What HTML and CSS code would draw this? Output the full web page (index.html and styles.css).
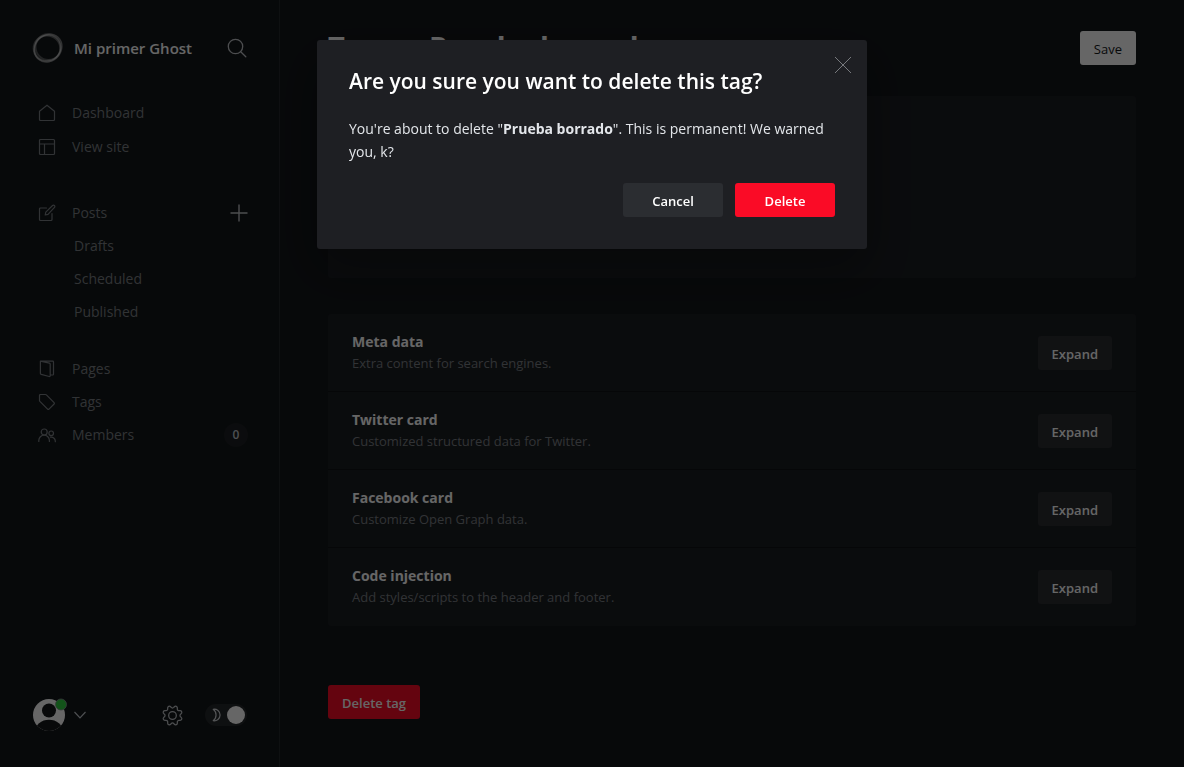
FILE: index.html
```html
<!DOCTYPE html>
<html lang="en">
<head>
<meta charset="utf-8">
<meta name="viewport" content="width=device-width, initial-scale=1">
<title>Tags - Mi primer Ghost</title>
<link rel="stylesheet" href="styles.css">
</head>
<body>
<div class="app">
  <aside class="sidebar">
    <header class="site">
      <svg class="site-logo" width="32" height="32" viewBox="0 0 32 32" fill="none" stroke="#fff" aria-hidden="true">
        <ellipse cx="15" cy="16.500" rx="13.300" ry="13" stroke-width="2" opacity=".32"/>
        <ellipse cx="16.500" cy="15" rx="13" ry="13" stroke-width="2" opacity=".28"/>
        <ellipse cx="15.500" cy="16.500" rx="12.500" ry="14" stroke-width="1.500" opacity=".3" transform="rotate(35 15.500 16.500)"/>
        <ellipse cx="16" cy="15.500" rx="14.500" ry="12.500" stroke-width="1.500" opacity=".25" transform="rotate(-35 16 15.500)"/>
      </svg>
      <span class="site-name">Mi primer Ghost</span>
      <button class="icon-button" type="button" aria-label="Search">
        <svg width="20" height="20" viewBox="0 0 20 20" fill="none" stroke="currentColor" stroke-width="1.3" stroke-linecap="round"><circle cx="8.5" cy="8.5" r="7.2"/><path d="M13.7 13.7 18.8 18.8"/></svg>
      </button>
    </header>
    <nav class="nav">
      <ul class="nav-group">
        <li><a class="nav-link" href="#"><svg class="nav-icon" viewBox="0 0 18 18"><path d="M1.5 7.2 9 1.2l7.500 6v8.300a1 1 0 0 1-1 1h-13a1 1 0 0 1-1-1z"/></svg>Dashboard</a></li>
        <li><a class="nav-link" href="#"><svg class="nav-icon" viewBox="0 0 18 18"><rect x="1.500" y="1.500" width="15" height="15" rx="1"/><path d="M1.500 6h15M6.500 6v10.500"/></svg>View site</a></li>
      </ul>
      <ul class="nav-group">
        <li class="nav-row"><a class="nav-link" href="#"><svg class="nav-icon" viewBox="0 0 18 18"><path d="M8.500 4H2.500a1 1 0 0 0-1 1v10.500a1 1 0 0 0 1 1H13a1 1 0 0 0 1-1V9.500M7.200 11l.6-2.900 6.800-6.600a1.200 1.200 0 0 1 1.700 0l.2.200a1.200 1.200 0 0 1 0 1.700L10 10.300z"/></svg>Posts</a>
          <button class="icon-button" type="button" aria-label="New post"><svg width="18" height="18" viewBox="0 0 18 18" fill="none" stroke="currentColor" stroke-width="1.400"><path d="M9 .5v17M.5 9h17"/></svg></button></li>
        <li><a class="nav-link nav-sub" href="#">Drafts</a></li>
        <li><a class="nav-link nav-sub" href="#">Scheduled</a></li>
        <li><a class="nav-link nav-sub" href="#">Published</a></li>
      </ul>
      <ul class="nav-group">
        <li><a class="nav-link" href="#"><svg class="nav-icon" viewBox="0 0 18 18"><path d="M2.500 1.200h12.200a.8.8 0 0 1 .8.800v12.200a.8.8 0 0 1-.8.800h-2.200M2.500 1.200l8.900 1.900a1 1 0 0 1 .8.900v11.700a.8.800 0 0 1-1 .8l-8-2.100a1 1 0 0 1-.8-.9V1.200z"/></svg>Pages</a></li>
        <li><a class="nav-link" href="#"><svg class="nav-icon" viewBox="0 0 18 18"><path d="M1.500 2.400a.9.900 0 0 1 .9-.9h5a1.500 1.500 0 0 1 1 .4l7.700 7.700a1 1 0 0 1 0 1.400l-5.100 5.100a1 1 0 0 1-1.400 0L1.900 8.400a1.500 1.500 0 0 1-.4-1z"/></svg>Tags</a></li>
        <li class="nav-row"><a class="nav-link" href="#"><svg class="nav-icon" viewBox="0 0 18 18"><circle cx="6.200" cy="6" r="3"/><path d="M.8 15.500v-1a5.300 5.300 0 0 1 10.600 0v1"/><circle cx="13.200" cy="7.300" r="2.300"/><path d="M12.300 11.200a4 4 0 0 1 5 3.900v.6"/></svg>Members</a><span class="count">0</span></li>
      </ul>
    </nav>
    <footer class="account">
      <button class="user" type="button" aria-label="Account menu">
        <svg width="35" height="34" viewBox="0 0 35 34" aria-hidden="true">
          <clipPath id="avatar-clip"><circle cx="17" cy="17" r="16"/></clipPath>
          <g clip-path="url(#avatar-clip)">
            <path fill="#fff" d="M0 0h35v34H0z"/>
            <circle cx="17" cy="12.500" r="7" fill="#15181b"/>
            <ellipse cx="17" cy="33.500" rx="14" ry="11.800" fill="#15181b"/>
          </g>
          <circle cx="29" cy="6.500" r="5.500" fill="#30cf43" stroke="#8d9297" stroke-width=".8"/>
        </svg>
        <svg width="12" height="8" viewBox="0 0 12 8" fill="none" stroke="currentColor" stroke-width="1.200" aria-hidden="true"><path d="M.5 1 6 6.800 11.500 1"/></svg>
      </button>
      <button class="icon-button" type="button" aria-label="Settings">
        <svg width="21" height="21" viewBox="0 0 22 22" fill="none" stroke="currentColor" stroke-width="1.300" stroke-linejoin="round"><circle cx="11" cy="11" r="4"/><path transform="rotate(22.500 11 11)" d="M9.300 1.800a1.800 1.800 0 0 1 3.400 0l.3.900a1.800 1.800 0 0 0 2.500 1l.8-.4a1.800 1.800 0 0 1 2.400 2.400l-.4.800a1.800 1.800 0 0 0 1 2.500l.9.300a1.800 1.800 0 0 1 0 3.400l-.9.300a1.800 1.800 0 0 0-1 2.500l.4.800a1.800 1.800 0 0 1-2.400 2.400l-.8-.4a1.800 1.800 0 0 0-2.500 1l-.3.900a1.800 1.800 0 0 1-3.400 0l-.3-.9a1.800 1.800 0 0 0-2.500-1l-.8.400a1.800 1.800 0 0 1-2.400-2.400l.4-.8a1.800 1.800 0 0 0-1-2.500l-.9-.3a1.800 1.800 0 0 1 0-3.400l.9-.3a1.800 1.800 0 0 0 1-2.500l-.4-.8a1.800 1.800 0 0 1 2.400-2.400l.8.400a1.800 1.800 0 0 0 2.500-1z"/></svg>
      </button>
      <label class="night">
        <input class="night-input" type="checkbox" checked aria-label="Night shift">
        <svg class="night-moon" width="10" height="14" viewBox="0 0 10 14" fill="none" stroke="currentColor" stroke-width="1.200" stroke-linejoin="round" aria-hidden="true"><path d="M1.200 1.300a5.800 5.800 0 1 1 0 11.400c3.800-2.800 3.800-8.600 0-11.400z"/></svg>
      </label>
    </footer>
  </aside>

  <main class="main">
    <header class="page-header">
      <h1 class="page-title">Tags <svg class="crumb" width="10" height="16" viewBox="0 0 10 16" fill="none" stroke="currentColor" stroke-width="2" aria-hidden="true"><path d="m2 2 6 6-6 6"/></svg> Prueba borrado</h1>
      <button class="button button-save" type="button">Save</button>
    </header>
    <section class="card settings" aria-label="Basic settings"></section>
    <section class="card sections">
      <div class="section-row"><div><h2 class="section-title">Meta data</h2><p class="section-text">Extra content for search engines.</p></div><button class="button button-gray" type="button">Expand</button></div>
      <div class="section-row"><div><h2 class="section-title">Twitter card</h2><p class="section-text">Customized structured data for Twitter.</p></div><button class="button button-gray" type="button">Expand</button></div>
      <div class="section-row"><div><h2 class="section-title">Facebook card</h2><p class="section-text">Customize Open Graph data.</p></div><button class="button button-gray" type="button">Expand</button></div>
      <div class="section-row"><div><h2 class="section-title">Code injection</h2><p class="section-text">Add styles/scripts to the header and footer.</p></div><button class="button button-gray" type="button">Expand</button></div>
    </section>
    <button class="button button-red" type="button">Delete tag</button>
  </main>
</div>

<div class="overlay">
  <div class="modal" role="dialog" aria-modal="true" aria-labelledby="modal-title">
    <button class="modal-close" type="button" aria-label="Close"><svg width="18" height="18" viewBox="0 0 18 18" fill="none" stroke="currentColor" stroke-width="1"><path d="m1 1 16 16M17 1 1 17"/></svg></button>
    <h2 class="modal-title" id="modal-title">Are you sure you want to delete this tag?</h2>
    <p class="modal-text">You're about to delete "<strong>Prueba borrado</strong>". This is permanent! We warned you, k?</p>
    <div class="modal-actions">
      <button class="button button-gray" type="button">Cancel</button>
      <button class="button button-red" type="button">Delete</button>
    </div>
  </div>
</div>
</body>
</html>
```
FILE: styles.css
```css
* { box-sizing: border-box; }

body {
  margin: 0;
  background: #13171a;
  color: #fff;
  font: 14px/20px "Open Sans", "Noto Sans", sans-serif;
}

h1, h2, p, ul { margin: 0; padding: 0; }
ul { list-style: none; }
svg { display: block; flex: none; }

button {
  border: 0;
  padding: 0;
  background: none;
  color: inherit;
  font: inherit;
  cursor: pointer;
}

.app {
  display: grid;
  grid-template-columns: 280px 1fr;
  min-height: 100vh;
}

/* Sidebar */
.sidebar {
  display: flex;
  flex-direction: column;
  border-right: 1px solid #24282c;
}

.site {
  display: flex;
  align-items: center;
  gap: 10px;
  padding: 32px 32px 0;
}

.site-name {
  flex: 1;
  font-size: 15px;
  font-weight: 600;
  white-space: nowrap;
}

.icon-button { color: #c0c4c8; }

.nav {
  flex: 1;
  display: flex;
  flex-direction: column;
  gap: 24px;
  padding: 32px 31px 0 38px;
}

.nav-group:first-child { padding-bottom: 8px; }

.nav-row {
  display: flex;
  align-items: center;
  justify-content: space-between;
}

.nav-link {
  display: flex;
  align-items: center;
  gap: 16px;
  height: 33px;
  color: #7b8085;
  text-decoration: none;
}

.nav-group:first-child .nav-link { height: 34px; }

.nav-sub { padding-left: 36px; }

.nav-icon {
  width: 18px;
  height: 18px;
  fill: none;
  stroke: currentColor;
  stroke-width: 1.2;
  stroke-linejoin: round;
  stroke-linecap: round;
}

.count {
  min-width: 24px;
  border-radius: 12px;
  background: #1d2023;
  color: #c0c6cc;
  font-size: 12px;
  font-weight: 600;
  line-height: 24px;
  text-align: center;
}

.account {
  display: flex;
  align-items: center;
  gap: 22px;
  padding: 0 32px 35px;
}

.user {
  display: flex;
  align-items: center;
  gap: 7px;
  margin-right: auto;
  color: #c0c6cc;
}

.night {
  position: relative;
  display: flex;
  cursor: pointer;
}

.night-input {
  appearance: none;
  display: flex;
  justify-content: flex-end;
  width: 42px;
  height: 22px;
  margin: 0;
  padding: 2px;
  border-radius: 11px;
  background: #25282b;
}

.night-input::before {
  content: "";
  width: 18px;
  border-radius: 50%;
  background: #fff;
}

.night-moon {
  position: absolute;
  top: 4px;
  left: 7px;
  color: #d0d4d8;
}

/* Page */
.main {
  display: flex;
  flex-direction: column;
  align-items: stretch;
  padding: 24px 48px 48px;
}

.page-header {
  display: flex;
  align-items: center;
  justify-content: space-between;
  height: 48px;
  margin-bottom: 24px;
}

.page-title {
  display: flex;
  align-items: center;
  gap: 13px;
  padding-bottom: 2px;
  font-size: 29px;
  font-weight: 700;
  line-height: 38px;
}

.crumb { color: #7b8085; }

.button {
  flex: none;
  height: 34px;
  padding: 2px 14px 0;
  border-radius: 3px;
  font-size: 13px;
  font-weight: 600;
}

.button-save {
  background: #fff;
  color: #15171a;
  font-weight: 500;
}

.button-gray { background: #2b2d31; }
.button-red { background: #fa0b26; }
.main > .button-red { align-self: flex-start; }

.card {
  border-radius: 3px;
  background: #1b1e22;
}

.settings {
  min-height: 182px;
  margin-bottom: 36px;
}

.sections { margin-bottom: 59px; }

.section-row {
  display: flex;
  align-items: center;
  justify-content: space-between;
  padding: 17px 24px;
}

.section-row:not(:last-child) { box-shadow: inset 0 -1px #101315; }

.section-title {
  font-size: 14px;
  font-weight: 700;
  line-height: 22px;
}

.section-text {
  color: #7b8085;
  font-size: 13px;
  line-height: 20px;
  padding-bottom: 2px;
}

/* Dialog */
.overlay {
  position: fixed;
  inset: 0;
  display: flex;
  align-items: flex-start;
  justify-content: center;
  padding: 40px 16px;
  background: rgba(0, 0, 0, 0.6);
}

.modal {
  position: relative;
  width: 100%;
  max-width: 550px;
  padding: 26px 32px 32px;
  border-radius: 3px;
  background: #1e1f23;
  box-shadow: 0 20px 50px rgba(0, 0, 0, 0.35);
}

.modal-close {
  position: absolute;
  top: 16px;
  right: 15px;
  color: #77797d;
}

.modal-title {
  margin-bottom: 20px;
  font-size: 21px;
  font-weight: 600;
  line-height: 31px;
}

.modal-text {
  margin-bottom: 20px;
  color: #e3e6ea;
  font-size: 14px;
  line-height: 23px;
}

.modal-actions {
  display: flex;
  justify-content: flex-end;
  gap: 12px;
}

.modal-actions .button { min-width: 100px; }
```
